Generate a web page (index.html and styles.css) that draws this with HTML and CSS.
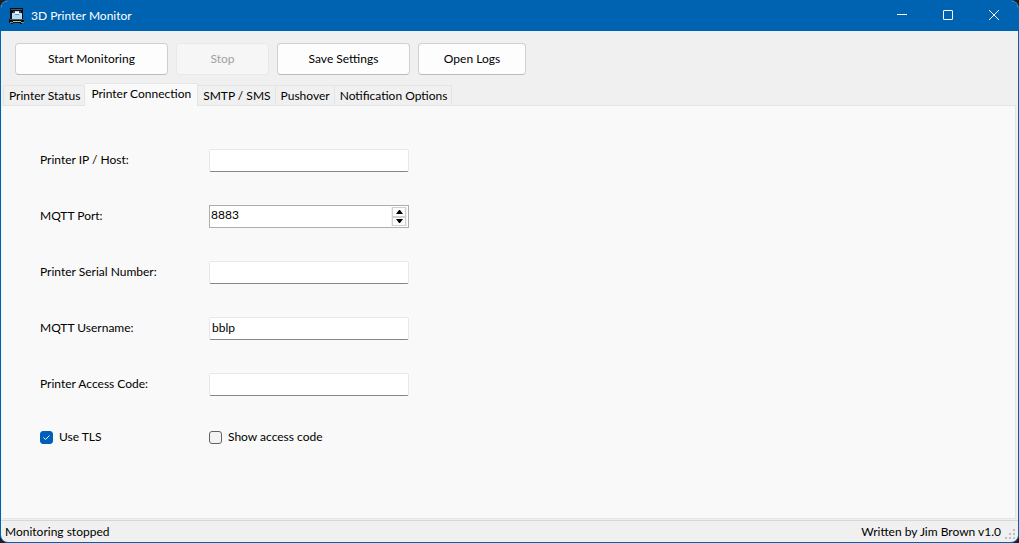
FILE: index.html
```
<!DOCTYPE html>
<html lang="en">
<head>
  <meta charset="UTF-8">
  <meta name="viewport" content="width=device-width, initial-scale=1.0">
  <title>3D Printer Monitor</title>
  <link rel="stylesheet" href="styles.css">
</head>
<body>

<div class="window">
  <header class="title-bar">
    <svg class="app-icon" width="16" height="16" viewBox="0 0 16 16" aria-hidden="true">
      <path d="M1 0h13v11h1v4h-2v1h-2v-1H4v1H2v-1H0v-4h1z" fill="#0b0d16"/>
      <path d="M2 1.5h11" stroke="#4b5768"/>
      <path d="M4 3h8v2h1v6H3V5h1z" fill="#b5dcfa"/>
      <path d="M4 3h2v2H4zM10 3h2v2h-2z" fill="#33475f"/>
      <path d="M6 4h4v2H6z" fill="#eef7ff"/>
      <path d="M6 6.5h4" stroke="#6d8ba8"/>
      <path d="M1 11.5h14" stroke="#55535e"/>
      <path d="M1 14.5h3M12 14.5h3" stroke="#8d8b96"/>
      <path d="M4 13.5h8" stroke="#a5d36b"/>
    </svg>
    <span class="title">3D Printer Monitor</span>
    <div class="window-controls">
      <button type="button" aria-label="Minimize">
        <svg width="10" height="10" viewBox="0 0 10 10"><path d="M0 4.5h10"/></svg>
      </button>
      <button type="button" aria-label="Maximize">
        <svg width="10" height="10" viewBox="0 0 10 10"><rect x="0.5" y="0.5" width="9" height="9" rx="0.5"/></svg>
      </button>
      <button type="button" aria-label="Close">
        <svg width="10" height="10" viewBox="0 0 10 10"><path d="M0 0l10 10M10 0L0 10"/></svg>
      </button>
    </div>
  </header>

  <div class="toolbar">
    <button type="button" class="btn btn-start">Start Monitoring</button>
    <button type="button" class="btn btn-stop" disabled>Stop</button>
    <button type="button" class="btn btn-save">Save Settings</button>
    <button type="button" class="btn btn-logs">Open Logs</button>
  </div>

  <div class="tabs" role="tablist">
    <button type="button" class="tab" role="tab">Printer Status</button>
    <button type="button" class="tab active" role="tab" aria-selected="true">Printer Connection</button>
    <button type="button" class="tab" role="tab">SMTP / SMS</button>
    <button type="button" class="tab" role="tab">Pushover</button>
    <button type="button" class="tab" role="tab">Notification Options</button>
  </div>

  <main class="tab-page">
    <form class="settings" onsubmit="return false">
      <label class="caption" for="host">Printer IP / Host:</label>
      <input type="text" class="field" id="host">

      <label class="caption" for="port">MQTT Port:</label>
      <div class="spinner">
        <input type="number" id="port" value="8883" min="1" max="65535">
        <div class="spinner-buttons">
          <button type="button" aria-label="Increase port" onclick="port.stepUp()">
            <svg width="7" height="4" viewBox="0 0 7 4"><path d="M3 0h1l3 4H0z"/></svg>
          </button>
          <button type="button" aria-label="Decrease port" onclick="port.stepDown()">
            <svg width="7" height="4" viewBox="0 0 7 4"><path d="M0 0h7L4 4H3z"/></svg>
          </button>
        </div>
      </div>

      <label class="caption" for="serial">Printer Serial Number:</label>
      <input type="text" class="field" id="serial">

      <label class="caption" for="username">MQTT Username:</label>
      <input type="text" class="field" id="username" value="bblp">

      <label class="caption" for="access-code">Printer Access Code:</label>
      <input type="password" class="field" id="access-code">

      <label class="check">
        <input type="checkbox" checked>
        <svg class="tick" width="13" height="13" viewBox="0 0 13 13"><path d="M3.5 6.5l2 2 4-4"/></svg>
        Use TLS
      </label>
      <label class="check">
        <input type="checkbox" id="show-code">
        Show access code
      </label>
    </form>
  </main>

  <footer class="status-bar">
    <span>Monitoring stopped</span>
    <span class="credit">Written by Jim Brown v1.0</span>
    <svg class="grip" width="10" height="10" viewBox="0 0 10 10" aria-hidden="true">
      <path d="M8 0h2v2H8zM4 4h2v2H4zM8 4h2v2H8zM0 8h2v2H0zM4 8h2v2H4zM8 8h2v2H8z"/>
    </svg>
  </footer>
</div>

<script>
  const port = document.getElementById('port');

  document.getElementById('show-code').addEventListener('change', function(event) {
    document.getElementById('access-code').type = event.target.checked ? 'text' : 'password';
  });
</script>

</body>
</html>
```
FILE: styles.css
```
* {
  box-sizing: border-box;
}
body {
  margin: 0;
  background: #1f1f1f;
  color: #000;
  font-family: Lato, "Segoe UI", sans-serif;
  font-size: 12px;
  line-height: 16px;
}
button, input {
  font: inherit;
  color: inherit;
}
.window {
  display: flex;
  flex-direction: column;
  min-height: 100vh;
  border: 1px solid #0063b1;
  border-radius: 8px;
  background: #f0f0f0;
  overflow: hidden;
}

/* title bar */
.title-bar {
  display: flex;
  align-items: center;
  height: 30px;
  padding-left: 8px;
  background: #0063b1;
  color: #fff;
}
.title {
  margin-left: 6px;
}
.window-controls {
  display: flex;
  margin-left: auto;
}
.window-controls button {
  display: flex;
  align-items: center;
  justify-content: center;
  width: 46px;
  height: 30px;
  padding: 0 2px 2px 0;
  border: none;
  background: none;
}
.window-controls svg {
  fill: none;
  stroke: #fff;
}

/* toolbar */
.toolbar {
  display: flex;
  gap: 8px;
  padding: 12px 14px 8px;
}
.btn {
  height: 32px;
  padding: 0;
  border: 1px solid #d0d0d0;
  border-bottom-color: #bcbcbc;
  border-radius: 4px;
  background: #fdfdfd;
}
.btn:disabled {
  border-color: #e9e9e9;
  background: #f6f6f6;
  color: #a0a0a0;
}
.btn-start {
  width: 153px;
}
.btn-stop {
  width: 93px;
}
.btn-save {
  width: 133px;
}
.btn-logs {
  width: 108px;
}

/* tabs */
.tabs {
  display: flex;
  align-items: flex-end;
  padding-left: 2px;
}
.tab {
  height: 20px;
  padding: 0 4px 0 5px;
  border: 1px solid #e5e5e5;
  border-width: 1px 1px 0 0;
  background: #f0f0f0;
  white-space: nowrap;
}
.tab:first-child {
  border-left-width: 1px;
}
.tab.active {
  height: 23px;
  margin-bottom: -1px;
  padding: 0 6px 2px;
  background: #f9f9f9;
  z-index: 1;
}
.tab-page {
  flex: 1;
  margin: 0 2px 1px 1px;
  padding: 43px 37px;
  border: 1px solid #e5e5e5;
  border-left-color: #f9f9f9;
  background: #f9f9f9;
}

/* settings form */
.settings {
  display: grid;
  grid-template-columns: 169px 200px;
  row-gap: 33px;
  align-items: center;
}
.caption {
  padding-bottom: 2px;
}
.field {
  width: 100%;
  height: 23px;
  padding: 0 2px 2px;
  border: 1px solid #e8e8e8;
  border-bottom-color: #868686;
  border-radius: 2px;
  background: #fff;
}
.spinner {
  display: flex;
  height: 23px;
  padding: 1px;
  border: 1px solid #abadb3;
  background: #fff;
}
.spinner input {
  flex: 1;
  min-width: 0;
  height: 16px;
  padding: 0;
  border: none;
  background: none;
  appearance: textfield;
}
.spinner input::-webkit-inner-spin-button {
  appearance: none;
}
.spinner-buttons {
  display: flex;
  flex-direction: column;
  width: 16px;
  padding: 0 1px;
  background: #f0f0f0;
}
.spinner-buttons button {
  display: flex;
  flex: 1;
  align-items: center;
  justify-content: center;
  padding: 0;
  border: 1px solid #d0d0d0;
  background: #fdfdfd;
}
.check {
  display: flex;
  align-items: center;
  gap: 6px;
  position: relative;
  height: 16px;
}
.check input {
  width: 13px;
  height: 13px;
  margin: 0;
  border: 1px solid #626262;
  border-radius: 3px;
  background: #f3f3f3;
  appearance: none;
}
.check input:checked {
  border-color: #005fb8;
  background: #005fb8;
}
.tick {
  position: absolute;
  left: 0;
  fill: none;
  stroke: #fff;
  pointer-events: none;
}
.check input:not(:checked) + .tick {
  display: none;
}

/* status bar */
.status-bar {
  display: flex;
  align-items: center;
  height: 22px;
  padding: 0 3px 0 4px;
  border-top: 1px solid #d7d7d7;
}
.credit {
  margin-left: auto;
}
.grip {
  align-self: flex-end;
  margin: 0 0 3px 4px;
  fill: #bfbfbf;
}
```
